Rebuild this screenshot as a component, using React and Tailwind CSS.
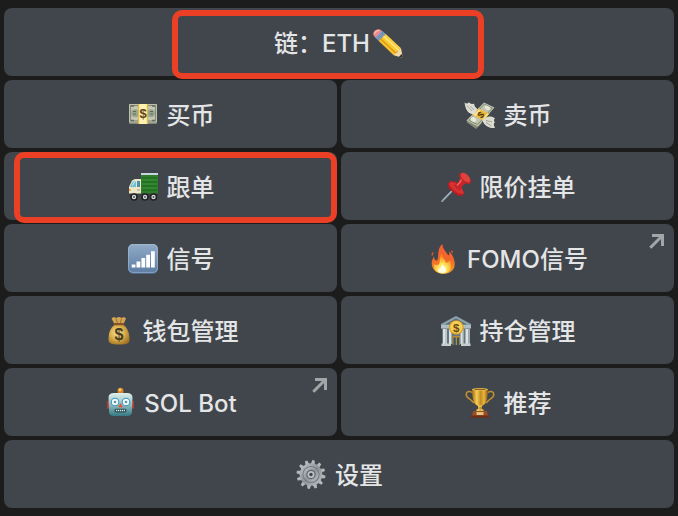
import React from "react";

function Icon({ children }) {
  return (
    <svg viewBox="0 0 32 32" className="h-8 w-8 shrink-0" aria-hidden="true">
      {children}
    </svg>
  );
}

function Dollar({ x, y, size, fill = "#4a3a10", transform }) {
  return (
    <text
      x={x}
      y={y}
      fontSize={size}
      fill={fill}
      textAnchor="middle"
      transform={transform}
      className="font-['Liberation_Sans',sans-serif] font-bold"
    >
      $
    </text>
  );
}

function Pencil() {
  return (
    <Icon>
      <defs>
        <linearGradient id="pencilBody" x1="0" y1="1" x2="1" y2="0">
          <stop offset="0" stopColor="#f0a818" />
          <stop offset="0.5" stopColor="#fbc92f" />
          <stop offset="1" stopColor="#fee36a" />
        </linearGradient>
      </defs>
      <path d="M1.300 9C.5 6 3.800 2.800 7.300 3.300L10.200 5 3.500 11.800z" fill="#f0898c" />
      <path d="M2.500 7.800C3.400 5.600 5 4.400 7.300 4.300" stroke="#fbb9b5" strokeWidth="1.300" fill="none" />
      <path d="M3.200 11.600 9.900 4.800 13.800 8 6.700 15z" fill="#8ba3c4" />
      <path d="M4.500 12.700 11.200 6M5.700 13.900 12.400 7.200" stroke="#566f96" strokeWidth=".7" />
      <path d="M6.700 15 13.800 8 29 22.300 21.700 29.200z" fill="url(#pencilBody)" />
      <path d="M8.800 13 24 27.200" stroke="#d99616" strokeWidth="1.200" />
      <path d="M11.700 10.200 27 24.500" stroke="#ffe98b" strokeWidth="1.200" />
      <path d="M29 22.300 31 32 21.700 29.200 23.200 27.300 25 26.600 26.300 24.600z" fill="#f3d9a4" />
      <path d="M30.100 27.800 31 32 26.900 30.800z" fill="#35312f" />
    </Icon>
  );
}

function Banknote() {
  return (
    <Icon>
      <rect x="2" y="6" width="28" height="20" rx=".8" fill="#777d6c" />
      <rect x="2" y="6" width="28" height="18.500" rx=".8" fill="#c6c8b4" />
      <rect x="3.500" y="7.500" width="25" height="15.500" fill="none" stroke="#858b7a" strokeWidth="1.200" />
      <circle cx="8" cy="15.300" r="4" fill="#99a58f" />
      <circle cx="24" cy="15.300" r="4" fill="#99a58f" />
      <path d="M6 13.500h3M6 16h3M23 13.500h3M23 16h3" stroke="#5d6c59" strokeWidth="1" />
      <path d="M4 8h3M4 22.500h3M25 8h3M25 22.500h3" stroke="#646d58" strokeWidth="1.400" />
      <path d="M3 25h26M3 24h26" stroke="#a6aa99" strokeWidth=".5" />
      <path d="M11 6h10v20H11z" fill="#f4d878" />
      <path d="M12.500 6h7v20h-7z" fill="#fff0b4" />
      <path d="M11.300 6v20M20.700 6v20" stroke="#d3a938" strokeWidth=".8" />
      <Dollar x="16" y="20" size="13" fill="#5b4518" />
    </Icon>
  );
}

function FlyingMoney() {
  return (
    <Icon>
      <path d="M2.500 24 8.500 17 18 25 12 31z" fill="#858b78" />
      <path d="M2.500 22.500 20 4.500 30.500 9.500 14 28.500z" fill="#bfc5ae" />
      <path d="M4.800 22.300 20.300 6.200 28.300 10 13.700 26.500z" fill="none" stroke="#79846c" strokeWidth=".9" />
      <ellipse cx="9.500" cy="21.500" rx="3" ry="2.200" fill="#e6e9d7" transform="rotate(35 9.500 21.500)" />
      <ellipse cx="23.500" cy="9.800" rx="3" ry="1.800" fill="#e6e9d7" transform="rotate(25 23.500 9.800)" />
      <path d="M8.300 17 14.600 10.200 25.300 15.800 19.700 22.800z" fill="#f0b93f" />
      <path d="M9.500 17 14.800 11.400 17 12.600 11.500 18.300zM18.200 21 23.500 15.200 24.500 15.900 19.500 21.800z" fill="#ffe398" />
      <Dollar x="17" y="20" size="9.500" transform="rotate(-45 17 17)" />
      <path d="M10.500 16.300C5 16.500 1.500 13 .6 4.500 2.500 6 3.500 5.700 5 4.300 6.500 6 8 6.500 10 5.400 10.300 8 11.500 9.500 13.500 11z" fill="#deddd4" />
      <path d="M3 7.500 8 13M6.500 8 10 12" stroke="#98998e" strokeWidth=".8" />
      <path d="M18.500 22.500C22 18 27.500 17.500 31 20.500 29.500 21.500 29.800 23 31 24.500 29.500 25 29.300 26.700 31 30 26 30.500 20.500 28.500 18.500 22.500z" fill="#dddcd1" />
      <path d="M22 22.500 28 24M22 24.500 27.500 28" stroke="#999a8f" strokeWidth=".9" />
    </Icon>
  );
}

function Truck() {
  return (
    <Icon>
      <path d="M14 3h17v22H14z" fill="#2d7d2b" />
      <path d="M14 3h17v2H14z" fill="#c8d4df" />
      <path d="M15 8h15M15 12h15M15 16h15M15 20h15" stroke="#1d6420" strokeWidth="1" />
      <path d="M15 10h15M15 14h15M15 18h15" stroke="#3d9434" strokeWidth=".9" />
      <path d="M2 25V17L5 10.500 8 9h6v16z" fill="#ece6c9" />
      <path d="M3 17 5.700 11.500H9V17z" fill="#72bfd4" />
      <path d="M10 11h3v6h-3z" fill="#4c91ab" />
      <path d="M5.500 15.500 7.500 12" stroke="#c7f1f4" strokeWidth="1" />
      <path d="M10 20h3" stroke="#9c967d" strokeWidth="1" />
      <circle cx="2.900" cy="20" r="1.100" fill="#ee9a39" />
      <path d="M1.500 23.500H31V26H1.500z" fill="#3c3e40" />
      {[7, 18, 26.500].map((cx) => (
        <g key={cx}>
          <circle cx={cx} cy="27" r="3.800" fill="#202123" />
          <circle cx={cx} cy="27" r="2.200" fill="#d5d6d7" />
          <circle cx={cx} cy="27" r=".9" fill="#4b4d50" />
        </g>
      ))}
    </Icon>
  );
}

function Pushpin() {
  return (
    <Icon>
      <path d="M14 19 2 31.300" stroke="#8ca1b1" strokeWidth="1.700" strokeLinecap="round" />
      <path d="M13 19.300 3 29.600" stroke="#cfdee4" strokeWidth=".6" />
      <path d="M8.500 13C10 10 15 10.500 19 14.500S25 23.500 22.500 25.500 15 24.500 11.500 21 7 15.500 8.500 13z" fill="#b51f24" />
      <path d="M9.500 12.500C12 11 16 12.500 19.500 16S24 22.500 23.500 24C20 24.500 16 22.500 13 19.500S9 14.500 9.500 12.500z" fill="#d93132" />
      <path d="M14 15C17 14 19.500 11 20.500 7L27 12.500C23.500 14 21 17 20.500 20.500 18 20 15 18 14 15z" fill="#c62529" />
      <path d="M17 15.500C19.500 13.500 20.800 11.500 21.800 9" stroke="#f0625a" strokeWidth="1.600" fill="none" />
      <path d="M19.500 4C21 1.800 25 3 28 6S32 12 30 13.500 25 13 22 10 18.500 6 19.500 4z" fill="#c22327" />
      <ellipse cx="25.500" cy="7.500" rx="5.800" ry="3.200" fill="#e1413d" transform="rotate(45 25.500 7.500)" />
    </Icon>
  );
}

function Signal() {
  return (
    <Icon>
      <defs>
        <linearGradient id="signalTile" x1="0" y1="0" x2="0" y2="1">
          <stop offset="0" stopColor="#91abc8" />
          <stop offset="1" stopColor="#5c7ca3" />
        </linearGradient>
      </defs>
      <rect x="1" y="2" width="30" height="30" rx="5" fill="#4b6a90" />
      <rect x="1" y="2" width="30" height="29" rx="5" fill="url(#signalTile)" />
      <rect x="1.600" y="2.600" width="28.800" height="27.800" rx="4.500" fill="none" stroke="#a9bdd3" strokeWidth=".6" />
      <path d="M4.700 22.500h3.700V25.500H4.700zM9.500 19.500h3.800v6H9.500zM14.400 16h3.800v9.500h-3.800zM19.200 12.700H23v12.800h-3.800zM24 9.300h3.800v16.200H24z" fill="#fff" />
    </Icon>
  );
}

function Fire() {
  return (
    <Icon>
      <defs>
        <linearGradient id="flameOuter" x1="0" y1="0" x2="0" y2="1">
          <stop offset="0" stopColor="#f65d32" />
          <stop offset=".5" stopColor="#f16728" />
          <stop offset="1" stopColor="#f59c27" />
        </linearGradient>
        <radialGradient id="flameInner" cx=".5" cy=".8" r=".65">
          <stop offset="0" stopColor="#fffbd0" />
          <stop offset=".5" stopColor="#ffdc4c" />
          <stop offset="1" stopColor="#f98c25" />
        </radialGradient>
      </defs>
      <path d="M15.500 2C15.200 6 18.500 9 21 13 22 14.300 22.700 12 22.300 9.300 26 13 28.500 19 27.500 24.500 26.500 29 22 31.800 16.500 31.800 10.500 31.800 5.500 28.500 4.800 22.500 4.300 19 6 16 7 14.500 7.300 17 8 18.500 9.800 18.500 11.500 17 10.800 13.500 11.500 9.500 12 6 13.500 3.500 15.500 2z" fill="url(#flameOuter)" />
      <path d="M6.500 10.500C5.300 11 4.800 12.500 5.500 13.500M24.500 8.500 25.500 10.800" stroke="#e6592d" strokeWidth="1.300" fill="none" />
      <path d="M15 11.500C14.500 15 18 17 18.800 20.500 20 21.500 21.700 20 22.500 18.500 25 22.500 24.500 28 20.800 30.300 17 32.300 11.500 31.800 8.500 28.500 6.500 26 6.500 24 7.300 22 9 23.800 11.500 23.500 12.300 21.500 13.300 18.500 12 15 15 11.500z" fill="url(#flameInner)" />
      <path d="M16 21C15.500 23 17.500 24.500 18.500 26.500 20 28.800 18.500 31 15.800 31 12.500 31 10.500 29 11 27 12.500 27.500 15 25 16 21z" fill="#fffde2" />
    </Icon>
  );
}

function MoneyBag() {
  return (
    <Icon>
      <defs>
        <radialGradient id="bagBody" cx=".42" cy=".4" r=".65">
          <stop offset="0" stopColor="#fae39a" />
          <stop offset=".55" stopColor="#d8ae4b" />
          <stop offset="1" stopColor="#a27423" />
        </radialGradient>
      </defs>
      <path d="M11.500 11C7 14 5.500 20 5.500 25.500 5.500 29.500 8 30.500 16 30.500S26.500 29.500 26.500 25.500C26.500 20 25 14 20.500 11z" fill="url(#bagBody)" />
      <path d="M8.500 4.500C10 2.500 12 3 13.500 4 15 2.500 17 2.500 18.500 4 20.500 2.700 22 3 23 4.500L20.500 10h-9z" fill="#d3a554" />
      <path d="M13 4.500 14.500 9M18.500 4.500 17.500 9" stroke="#956b26" strokeWidth=".9" />
      <rect x="10.500" y="9" width="11" height="2.300" rx="1" fill="#8b5428" />
      <Dollar x="16" y="26" size="16" fill="#463a22" />
    </Icon>
  );
}

function Bank() {
  return (
    <Icon>
      <path d="M16 2 31 10v3H1v-3z" fill="#8fa3ad" />
      <path d="M16 4.200 27 10.500H5z" fill="#596d79" />
      <path d="M2 13h28v17H2z" fill="#647680" />
      <path d="M1 11h30v3.500H1z" fill="#aebdc2" />
      <path d="M3 15h4v15H3zM9 15h3v15H9zM20.500 15h3v15h-3zM25.500 15h4v15h-4z" fill="#dce2e1" />
      <path d="M6 15v15M11.500 15v15M23 15v15M28.500 15v15" stroke="#95a5aa" strokeWidth=".9" />
      <path d="M12.500 22h7.500v9h-7.500z" fill="#b98b32" />
      <path d="M13.500 23.500h2.200V31h-2.200zM17 23.500h2.200V31H17z" fill="#34536c" />
      <path d="M1.500 29.500h9.500V32H1.500zM21 29.500h9.500V32H21z" fill="#c6cecd" />
      <circle cx="16.300" cy="13.500" r="7.300" fill="#d89d25" />
      <circle cx="16.300" cy="13.300" r="6.200" fill="#f8cf51" />
      <Dollar x="16.300" y="17.500" size="11.500" fill="#674a19" />
    </Icon>
  );
}

function Robot() {
  return (
    <Icon>
      <defs>
        <linearGradient id="robotFace" x1="0" y1="0" x2="0" y2="1">
          <stop offset="0" stopColor="#e0f0eb" />
          <stop offset=".5" stopColor="#94bdc0" />
          <stop offset="1" stopColor="#347984" />
        </linearGradient>
      </defs>
      <path d="M3 15h3v7.500H3zM27 15h3v7.500h-3z" fill="#b23b36" />
      <path d="M12.500 8 14.500 5.500h4l2 2.500z" fill="#578d97" />
      <circle cx="16.500" cy="4.800" r="3" fill="#de832c" />
      <circle cx="16" cy="3.900" r="1.300" fill="#ffd668" />
      <path d="M4.500 11.500C4.500 8.500 6.500 7 10 7h13c3.500 0 5.500 1.500 5.500 4.500L28 25c0 3.500-1.500 5-5 5H10c-3.500 0-5-1.500-5-5z" fill="url(#robotFace)" />
      <circle cx="11" cy="16" r="4.300" fill="#3e98bb" />
      <circle cx="11" cy="16" r="3.200" fill="#eefcff" />
      <circle cx="11" cy="16" r="1.300" fill="#6a8fa1" />
      <circle cx="22" cy="16" r="4.300" fill="#3e98bb" />
      <circle cx="22" cy="16" r="3.200" fill="#eefcff" />
      <circle cx="22" cy="16" r="1.300" fill="#6a8fa1" />
      <path d="M16.500 17 18.900 21.300h-4.800z" fill="#e65338" />
      <rect x="10.500" y="22.700" width="12" height="3.700" rx="1.700" fill="#284c54" />
      <path d="M12 24.500h9" stroke="#d9ede8" strokeWidth="1.700" strokeDasharray="1.300 .7" />
    </Icon>
  );
}

function Trophy() {
  return (
    <Icon>
      <defs>
        <linearGradient id="trophyGold" x1="0" y1="0" x2="1" y2="0">
          <stop offset="0" stopColor="#a06b13" />
          <stop offset=".3" stopColor="#f5cf58" />
          <stop offset=".55" stopColor="#c28a20" />
          <stop offset=".75" stopColor="#e9b73c" />
          <stop offset="1" stopColor="#875510" />
        </linearGradient>
      </defs>
      <path d="M9 7C6 4.500 2.500 5 2.200 8.500 2 12 6 12.500 8 15 9 16.500 10 17 11.500 16M23 7C26 4.500 29.500 5 29.800 8.500 30 12 26 12.500 24 15 23 16.500 22 17 20.500 16" stroke="#c0902f" strokeWidth="1.500" fill="none" />
      <path d="M8 3h16c0 8-1 15-6 17v3l2 2h-8l2-2v-3C9 18 8 11 8 3z" fill="url(#trophyGold)" />
      <ellipse cx="16" cy="3.300" rx="8" ry="1.300" fill="#f3cb5b" />
      <ellipse cx="16" cy="3.400" rx="6.200" ry=".7" fill="#8c5d14" />
      <path d="M14 20h4M12.500 24h7" stroke="#f6d46c" strokeWidth="1" />
      <path d="M9 25h14l1 5H8z" fill="#9c4b26" />
      <path d="M7 29.500h18V32H7z" fill="#6d2e1a" />
      <path d="M12.500 26h7v3h-7z" fill="#e2c479" />
    </Icon>
  );
}

function Gear() {
  return (
    <Icon>
      <defs>
        <linearGradient id="gearSteel" x1="0" y1="0" x2="1" y2="1">
          <stop offset="0" stopColor="#c1c7ca" />
          <stop offset=".5" stopColor="#8c9296" />
          <stop offset="1" stopColor="#bec3c5" />
        </linearGradient>
      </defs>
      {[0, 30, 60, 90, 120, 150, 180, 210, 240, 270, 300, 330].map((angle) => (
        <path key={angle} d="M14 6 14.800 2h2.400L18 6z" fill="#b2b8bb" transform={`rotate(${angle + 10} 16 16.500)`} />
      ))}
      <circle cx="16" cy="16.500" r="11.200" fill="url(#gearSteel)" />
      <circle cx="16" cy="16.500" r="8.600" fill="#74797e" />
      <circle cx="16" cy="16.500" r="7.600" fill="url(#gearSteel)" />
      <circle cx="16" cy="16.500" r="4.700" fill="#5f656b" />
      <circle cx="16" cy="16.500" r="3.500" fill="#bbc1c4" />
      <circle cx="16" cy="16.500" r="1.700" fill="#40454b" />
    </Icon>
  );
}

function ExternalArrow() {
  return (
    <svg viewBox="0 0 15 15" className="absolute top-2.5 right-2.5 size-[15px]" aria-hidden="true">
      <path d="M3 1.500h10.500V12M13 2 1.300 13.700" fill="none" stroke="#a3a6a9" strokeWidth="3" />
    </svg>
  );
}

function KeyButton({ icon, label, external = false, wide = false, children }) {
  return (
    <button
      type="button"
      className={`relative flex h-[68px] items-center justify-center gap-2 rounded-lg bg-[#41464c] ${wide ? "col-span-2" : ""}`}
    >
      {icon}
      <span className="pt-1">{label}</span>
      {external && <ExternalArrow />}
      {children}
    </button>
  );
}

export default function App() {
  return (
    <main
      lang="zh-CN"
      className="grid min-h-screen grid-cols-2 content-start gap-1 bg-[#1c1c1c] px-1 py-2 font-[Inter,'Noto_Sans_CJK_SC',sans-serif] text-2xl font-medium whitespace-nowrap text-[#e4e5e6]"
    >
      <button type="button" className="relative col-span-2 flex h-[68px] items-center justify-center gap-0.5 rounded-lg bg-[#41464c]">
        <span className="pt-1">链：ETH</span>
        <Pencil />
        <span className="pointer-events-none absolute top-0.5 -bottom-[3px] left-1/4 right-[28.4%] z-10 rounded-[10px] border-6 border-[#eb4026]" />
      </button>
      <KeyButton icon={<Banknote />} label="买币" />
      <KeyButton icon={<FlyingMoney />} label="卖币" />
      <KeyButton icon={<Truck />} label="跟单">
        <span className="pointer-events-none absolute top-0 right-0 -bottom-[3px] left-2.5 z-10 rounded-[10px] border-6 border-[#eb4026]" />
      </KeyButton>
      <KeyButton icon={<Pushpin />} label="限价挂单" />
      <KeyButton icon={<Signal />} label="信号" />
      <KeyButton icon={<Fire />} label="FOMO信号" external />
      <KeyButton icon={<MoneyBag />} label="钱包管理" />
      <KeyButton icon={<Bank />} label="持仓管理" />
      <KeyButton icon={<Robot />} label="SOL Bot" external />
      <KeyButton icon={<Trophy />} label="推荐" />
      <KeyButton icon={<Gear />} label="设置" wide />
    </main>
  );
}
